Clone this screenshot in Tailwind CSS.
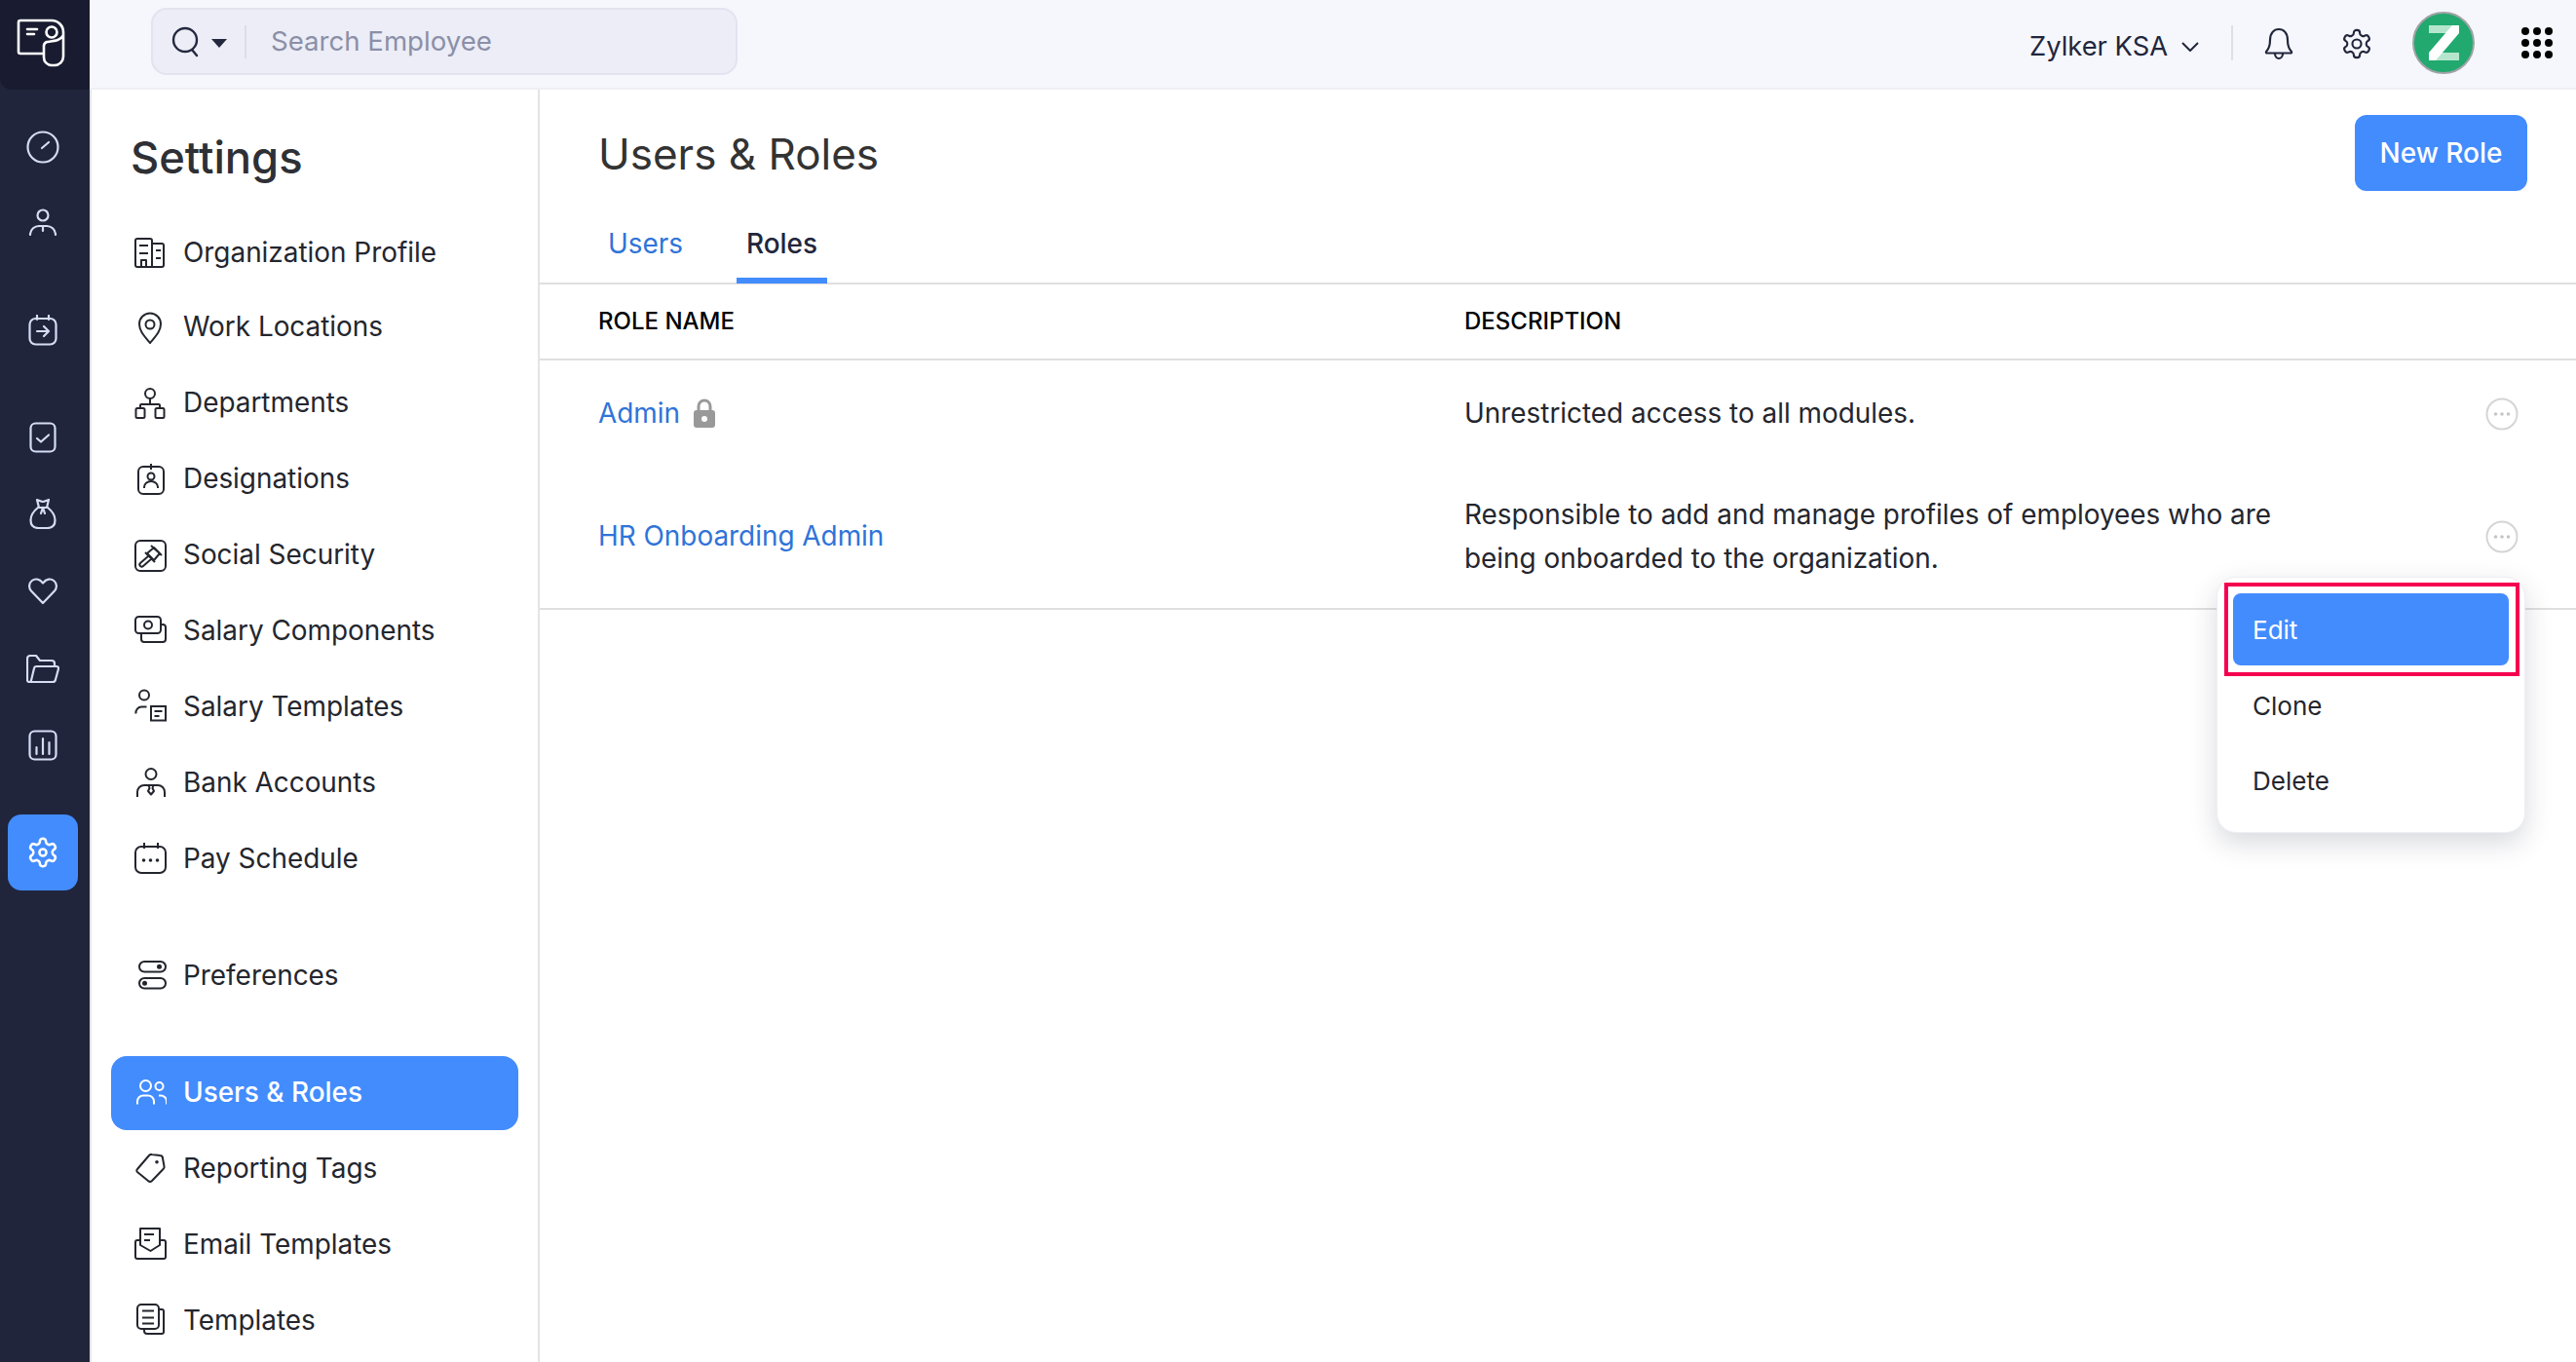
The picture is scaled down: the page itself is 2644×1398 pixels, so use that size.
<!DOCTYPE html>
<html lang="en">
<head>
<meta charset="utf-8">
<title>Users &amp; Roles</title>
<script src="https://cdn.jsdelivr.net/npm/@tailwindcss/browser@4"></script>
</head>
<body class="w-[2644px] h-[1398px] overflow-hidden bg-white [font-family:Inter,sans-serif] text-[#24262e]">
<div class="flex h-[1398px]">
  <!-- rail -->
  <aside class="w-[92px] shrink-0 bg-[#20253c] text-[#d5ddf3] flex flex-col items-center">
    <div class="w-[92px] h-[92px] bg-[#191c30] rounded-bl-[12px] flex items-center justify-center text-white pr-[8px] pb-[4px]">
      <svg width="48" height="48" viewBox="0 0 48 48" fill="none" stroke="currentColor" stroke-width="2.600" stroke-linejoin="round" stroke-linecap="round" class="overflow-visible"><path d="M27 35H3a2 2 0 0 1-2-2V3a2 2 0 0 1 2-2h32a12 12 0 0 1 12 12v25a9 9 0 0 1-9 9h-3a8 8 0 0 1-8-8V27c0-2 1-3 3-4 8-1 14-1 17-7"/><circle cx="35" cy="13" r="5.500"/><path d="M10 10h10M10 15h7"/></svg>
    </div>
    <nav class="pt-[20px] pr-[4px] flex flex-col items-center w-full">
      <div class="h-[78px] w-full flex items-center justify-center"><svg width="34" height="34" viewBox="0 0 34 34" fill="none" stroke="currentColor" stroke-width="2.200" stroke-linecap="round"><circle cx="17" cy="17" r="15.500"/><path d="M16 18l7-6"/></svg></div>
      <div class="h-[78px] w-full flex items-center justify-center"><svg width="30" height="30" viewBox="0 0 30 30" fill="none" stroke="currentColor" stroke-width="2.200" stroke-linecap="round"><circle cx="15" cy="7" r="5.500"/><path d="M2 27v-1a9 9 0 0 1 9-8h8a9 9 0 0 1 9 8v1M15 18v5"/></svg></div>
      <div class="h-[78px] w-full flex items-center justify-center mt-[32px]"><svg width="30" height="32" viewBox="0 0 30 32" fill="none" stroke="currentColor" stroke-width="2.200" stroke-linecap="round" stroke-linejoin="round"><rect x="1.500" y="4" width="27" height="26.500" rx="6"/><path d="M9 1v4M21 1v4M9 17h12M16 12l5 5-5 5"/></svg></div>
      <div class="h-[78px] w-full flex items-center justify-center mt-[32px]"><svg width="28" height="32" viewBox="0 0 28 32" fill="none" stroke="currentColor" stroke-width="2.200" stroke-linecap="round" stroke-linejoin="round"><rect x="1.500" y="1.500" width="25" height="29" rx="5"/><path d="M8 17l4 3.500 8-7"/></svg></div>
      <div class="h-[78px] w-full flex items-center justify-center"><svg width="28" height="32" viewBox="0 0 28 32" fill="none" stroke="currentColor" stroke-width="2.200" stroke-linecap="round" stroke-linejoin="round"><path d="M9 10C4 14 1.500 19 1.500 23c0 5 3 8 8 8h9c5 0 8-3 8-8 0-4-2.500-9-7.500-13"/><path d="M8 2c3 1 4 2 6 2s3-1 6-2l-2 8h-8zM14 10l-2 6M14 10l2 6"/></svg></div>
      <div class="h-[78px] w-full flex items-center justify-center mt-[2px]"><svg width="30" height="28" viewBox="0 0 30 28" fill="none" stroke="currentColor" stroke-width="2.200" stroke-linejoin="round"><path d="M15 26L3 13.500C0 10 .8 5.500 3.800 3c3-2.300 7.500-2 11.200 2.500C18.700 1 23.200.7 26.200 3c3 2.500 3.800 7 .8 10.500z"/></svg></div>
      <div class="h-[78px] w-full flex items-center justify-center mt-[2px]"><svg width="34" height="30" viewBox="0 0 34 30" fill="none" stroke="currentColor" stroke-width="2.200" stroke-linecap="round" stroke-linejoin="round"><path d="M3 28a2 2 0 0 1-2-2V4a3 3 0 0 1 3-3h6l4 5h12a3 3 0 0 1 3 3v3"/><path d="M3 28a2 2 0 0 0 2-1.500L8 14a2.500 2.500 0 0 1 2.500-2H31a2 2 0 0 1 2 2.500l-3 11a3 3 0 0 1-3 2.500z"/></svg></div>
      <div class="h-[78px] w-full flex items-center justify-center"><svg width="30" height="32" viewBox="0 0 30 32" fill="none" stroke="currentColor" stroke-width="2.200" stroke-linecap="round"><rect x="1.500" y="1.500" width="27" height="29" rx="5"/><path d="M8.500 18v7M15 9v16M21.500 13v12"/></svg></div>
      <div class="mt-[32px] w-[72px] h-[78px] rounded-[14px] bg-[#438cfe] text-white flex items-center justify-center"><svg width="34" height="34" viewBox="0 0 24 24" fill="none" stroke="currentColor" stroke-width="1.800" stroke-linejoin="round"><path d="M12.220 2h-.440a2 2 0 0 0-2 2v.180a2 2 0 0 1-1 1.730l-.430.250a2 2 0 0 1-2 0l-.150-.080a2 2 0 0 0-2.730.730l-.220.380a2 2 0 0 0 .730 2.730l.150.100a2 2 0 0 1 1 1.720v.510a2 2 0 0 1-1 1.740l-.150.090a2 2 0 0 0-.730 2.730l.220.380a2 2 0 0 0 2.730.730l.150-.080a2 2 0 0 1 2 0l.430.250a2 2 0 0 1 1 1.730V20a2 2 0 0 0 2 2h.440a2 2 0 0 0 2-2v-.180a2 2 0 0 1 1-1.730l.430-.250a2 2 0 0 1 2 0l.150.080a2 2 0 0 0 2.730-.730l.220-.390a2 2 0 0 0-.730-2.730l-.150-.080a2 2 0 0 1-1-1.740v-.500a2 2 0 0 1 1-1.740l.150-.090a2 2 0 0 0 .730-2.730l-.220-.380a2 2 0 0 0-2.730-.730l-.150.080a2 2 0 0 1-2 0l-.430-.250a2 2 0 0 1-1-1.730V4a2 2 0 0 0-2-2z"/><circle cx="12" cy="12" r="2.500"/></svg></div>
    </nav>
  </aside>

  <div class="flex-1 flex flex-col min-w-0">
    <!-- top bar -->
    <header class="h-[92px] shrink-0 bg-[#f6f7fc] border-b-2 border-[#eeeff3] flex items-center pl-[63px] pr-[24px]">
      <div class="w-[602px] h-[69px] -mt-[5px] rounded-[16px] bg-[#ecedf6] border-2 border-[#e2e3ef] flex items-center pl-[19px]">
        <svg width="30" height="32" viewBox="0 0 30 32" fill="none" stroke="#24283f" stroke-width="2.400" stroke-linecap="round"><circle cx="14" cy="14" r="12"/><path d="M21 24l5 6"/></svg>
        <svg width="16" height="9" viewBox="0 0 16 9" class="ml-[11px] mt-[4px]"><path d="M0 0h16L8 9z" fill="#24283f"/></svg>
        <div class="w-[2px] h-[34px] bg-[#dcdde8] ml-[18px]"></div>
        <span class="ml-[25px] text-[27.600px] text-[#8b8fa8]">Search Employee</span>
      </div>
      <div class="ml-auto flex items-center -mt-[2px]">
        <span class="text-[27.300px] text-[#21263c] mt-[8px]">Zylker KSA</span>
        <svg width="18" height="10" viewBox="0 0 18 10" fill="none" stroke="#21263c" stroke-width="2" class="ml-[14px] mt-[8px]"><path d="M1 1l8 8 8-8"/></svg>
        <div class="w-[2px] h-[36px] bg-[#dfe0e6] ml-[33px]"></div>
        <svg width="30" height="34" viewBox="0 0 30 34" fill="none" stroke="#21263c" stroke-width="2.200" stroke-linejoin="round" class="ml-[32px] mt-[2px]"><path d="M2 25c3-3 4-6 4-12 0-7 4-11 9-11s9 4 9 11c0 6 1 9 4 12a1 1 0 0 1-1 1.500H3A1 1 0 0 1 2 25z"/><path d="M11 27c0 3 2 5 4 5s4-2 4-5"/></svg>
        <svg width="34" height="34" viewBox="0 0 24 24" fill="none" stroke="#21263c" stroke-width="1.500" stroke-linejoin="round" class="ml-[48px] mt-[2px]"><path d="M12.220 2h-.440a2 2 0 0 0-2 2v.180a2 2 0 0 1-1 1.730l-.430.250a2 2 0 0 1-2 0l-.150-.080a2 2 0 0 0-2.730.730l-.220.380a2 2 0 0 0 .730 2.730l.150.100a2 2 0 0 1 1 1.720v.510a2 2 0 0 1-1 1.740l-.150.090a2 2 0 0 0-.730 2.730l.220.380a2 2 0 0 0 2.730.730l.150-.080a2 2 0 0 1 2 0l.430.250a2 2 0 0 1 1 1.730V20a2 2 0 0 0 2 2h.440a2 2 0 0 0 2-2v-.180a2 2 0 0 1 1-1.730l.430-.250a2 2 0 0 1 2 0l.150.080a2 2 0 0 0 2.730-.730l.220-.390a2 2 0 0 0-.730-2.730l-.150-.080a2 2 0 0 1-1-1.740v-.500a2 2 0 0 1 1-1.740l.150-.090a2 2 0 0 0 .730-2.730l-.220-.380a2 2 0 0 0-2.730-.730l-.150.080a2 2 0 0 1-2 0l-.430-.250a2 2 0 0 1-1-1.730V4a2 2 0 0 0-2-2z"/><circle cx="12" cy="12" r="3.200"/></svg>
        <svg width="64" height="64" viewBox="0 0 64 64" class="ml-[40px]"><circle cx="32" cy="32" r="31" fill="#21a96f" stroke="#a0a3a5" stroke-width="2"/><path d="M17 14h31v8L31 42h17v8H17v-8l17-20H17z" fill="#fff"/><path d="M17 14h24l-7 8H17zM48 42v8H24l7-8z" fill="#b5e6cd"/></svg>
        <svg width="32" height="32" viewBox="0 0 32 32" class="ml-[48px]" fill="#000"><circle cx="4" cy="4" r="4"/><circle cx="16" cy="4" r="4"/><circle cx="28" cy="4" r="4"/><circle cx="4" cy="16" r="4"/><circle cx="16" cy="16" r="4"/><circle cx="28" cy="16" r="4"/><circle cx="4" cy="28" r="4"/><circle cx="16" cy="28" r="4"/><circle cx="28" cy="28" r="4"/></svg>
      </div>
    </header>

    <div class="flex-1 flex min-h-0">
      <!-- settings nav -->
      <aside class="w-[462px] shrink-0 border-x-2 border-[#e4e4e6] pl-[20px] pr-[20px] text-[27.900px] text-[#24262e]">
        <h2 class="pl-[20px] pt-[43px] h-[130px] text-[45.300px] leading-[54px] font-medium text-[#2e3035]">Settings</h2>
        <ul class="flex flex-col gap-[2px]">
          <li class="h-[76px] -mb-[2px] flex items-center pl-[24px] gap-[17px]"><svg width="33" height="33" viewBox="0 0 33 33" fill="none" stroke="currentColor" stroke-width="2" stroke-linejoin="round" class="overflow-visible"><path d="M1 28V3a2 2 0 0 1 2-2h13a2 2 0 0 1 2 2v27"/><path d="M18 6h10a2 2 0 0 1 2 2v20a2 2 0 0 1-2 2H3a2 2 0 0 1-2-2"/><path d="M5 8h9M5 16h9M7 30v-7h5v7M22 13h5M22 21h5"/></svg><span>Organization Profile</span></li>
          <li class="h-[76px] flex items-center pl-[24px] gap-[17px]"><svg width="33" height="33" viewBox="0 0 33 33" fill="none" stroke="currentColor" stroke-width="2"><path d="M16 32C10 25 5 20 5 12.500a11 11 0 0 1 22 0C27 20 22 25 16 32z" stroke-linejoin="round"/><circle cx="16" cy="13" r="4.500"/></svg><span>Work Locations</span></li>
          <li class="h-[76px] flex items-center pl-[24px] gap-[17px]"><svg width="33" height="33" viewBox="0 0 33 33" fill="none" stroke="currentColor" stroke-width="2"><circle cx="16" cy="6" r="5"/><rect x="1.500" y="21" width="9" height="10" rx="1.500"/><rect x="21.500" y="21" width="9" height="10" rx="1.500"/><path d="M6 21v-3a1 1 0 0 1 1-1h18a1 1 0 0 1 1 1v3M16 11v6"/></svg><span>Departments</span></li>
          <li class="h-[76px] flex items-center pl-[24px] gap-[17px]"><svg width="33" height="33" viewBox="0 0 33 33" fill="none" stroke="currentColor" stroke-width="2"><rect x="4" y="3" width="26" height="28" rx="5"/><path d="M17 0v6"/><circle cx="17" cy="13" r="3.500"/><path d="M10 25v-1a7 6 0 0 1 14 0v1"/></svg><span>Designations</span></li>
          <li class="h-[76px] flex items-center pl-[24px] gap-[17px]"><svg width="33" height="33" viewBox="0 0 33 33" fill="none" stroke="currentColor" stroke-width="2" stroke-linejoin="round"><rect x="1" y="1" width="31" height="31" rx="5"/><path d="M20 8l6 6-6 7-7-7zM17 6l11 10M11 13l10 10M14 17l-8 7a2 2 0 0 0 3 3l8-7"/></svg><span>Social Security</span></li>
          <li class="h-[76px] flex items-center pl-[24px] gap-[17px]"><svg width="33" height="33" viewBox="0 0 33 33" fill="none" stroke="currentColor" stroke-width="2"><rect x="1" y="1" width="26" height="17" rx="3.500"/><circle cx="14" cy="9.500" r="4"/><path d="M27 9h2a3 3 0 0 1 3 3v12a3 3 0 0 1-3 3H10a3 3 0 0 1-3-3v-6"/></svg><span>Salary Components</span></li>
          <li class="h-[76px] flex items-center pl-[24px] gap-[17px]"><svg width="33" height="33" viewBox="0 0 33 33" fill="none" stroke="currentColor" stroke-width="2" class="overflow-visible"><circle cx="10" cy="3.500" r="5"/><path d="M1.500 22.500a6 6 0 0 1 6-7h5"/><rect x="17" y="15" width="15" height="14.500"/><path d="M20.500 20h8M20.500 25h5"/></svg><span>Salary Templates</span></li>
          <li class="h-[76px] flex items-center pl-[24px] gap-[17px]"><svg width="33" height="33" viewBox="0 0 33 33" fill="none" stroke="currentColor" stroke-width="2" stroke-linejoin="round"><circle cx="17" cy="6.500" r="5.500"/><path d="M3 30v-5a7 7 0 0 1 7-7h14a7 7 0 0 1 7 7v5"/><path d="M14.500 18h5l-1 3 1.500 3-3 3.500-3-3.500 1.500-3z"/></svg><span>Bank Accounts</span></li>
          <li class="h-[76px] flex items-center pl-[24px] gap-[17px]"><svg width="33" height="33" viewBox="0 0 33 33" fill="none" stroke="currentColor" stroke-width="2" class="overflow-visible"><rect x="1" y="3" width="31" height="27" rx="6"/><path d="M10 -1v6M24 -1v6"/><circle cx="9.500" cy="17" r="1.800" fill="currentColor" stroke="none"/><circle cx="16.500" cy="17" r="1.800" fill="currentColor" stroke="none"/><circle cx="23.500" cy="17" r="1.800" fill="currentColor" stroke="none"/></svg><span>Pay Schedule</span></li>
        </ul>
        <ul class="flex flex-col gap-[2px] mt-[44px]">
          <li class="h-[76px] flex items-center pl-[24px] gap-[17px]"><svg width="33" height="33" viewBox="0 0 33 33" fill="none" stroke="currentColor" stroke-width="2"><rect x="5" y="1" width="27" height="10.500" rx="5.250"/><rect x="5" y="18" width="27" height="10.500" rx="5.250"/><circle cx="25.500" cy="6.250" r="2.500" fill="currentColor" stroke="none"/><circle cx="10.500" cy="23.250" r="2.500" fill="currentColor" stroke="none"/></svg><span>Preferences</span></li>
        </ul>
        <ul class="flex flex-col gap-[2px] mt-[44px]">
          <li class="h-[76px] flex items-center pl-[24px] gap-[17px] bg-[#438cfe] rounded-[16px] text-white font-medium"><svg width="33" height="33" viewBox="0 0 33 33" fill="none" stroke="currentColor" stroke-width="2"><circle cx="11.500" cy="8.500" r="5.500"/><circle cx="25.500" cy="9" r="4"/><path d="M3 27.500v-3a6 6 0 0 1 6-6h5a6 6 0 0 1 6 6v3M25 18.500h2a6 6 0 0 1 6 6v3"/></svg><span>Users &amp; Roles</span></li>
          <li class="h-[76px] flex items-center pl-[24px] gap-[17px]"><svg width="33" height="33" viewBox="0 0 33 33" fill="none" stroke="currentColor" stroke-width="2" stroke-linejoin="round"><path d="M18 1l8 1a3 3 0 0 1 3 3l1.500 8a3 3 0 0 1-1 3L18 28a3 3 0 0 1-4 0L3 19a2 2 0 0 1 0-3L15 2a3 3 0 0 1 3-1z"/><circle cx="23" cy="8.700" r="1.800" fill="currentColor" stroke="none"/></svg><span>Reporting Tags</span></li>
          <li class="h-[76px] flex items-center pl-[24px] gap-[17px]"><svg width="33" height="33" viewBox="0 0 33 33" fill="none" stroke="currentColor" stroke-width="2" stroke-linejoin="round" class="overflow-visible"><path d="M6 11H3a2 2 0 0 0-2 2v15a2 2 0 0 0 2 2h27a2 2 0 0 0 2-2V13a2 2 0 0 0-2-2h-4"/><path d="M6 16V-1h20v17l-9.500 6z"/><path d="M10 5h10M10 11h6"/></svg><span>Email Templates</span></li>
          <li class="h-[76px] flex items-center pl-[24px] gap-[17px]"><svg width="33" height="33" viewBox="0 0 33 33" fill="none" stroke="currentColor" stroke-width="2" stroke-linejoin="round" class="overflow-visible"><rect x="3" y="-1" width="22" height="25" rx="4"/><path d="M25 4h3a2 2 0 0 1 2 2v21a2 2 0 0 1-2 2H13a3 3 0 0 1-3-3v-2M8 5.500h12M8 12.500h12M8 18.500h12"/></svg><span>Templates</span></li>
        </ul>
      </aside>

      <!-- main content -->
      <main class="relative flex-1 min-w-0 flex flex-col">
        <div class="flex items-start justify-between pl-[60px] pr-[50px] pt-[26px]">
          <h1 class="h-[78px] pt-[2px] flex items-center text-[44px] text-[#333]">Users &amp; Roles</h1>
          <button class="w-[177px] h-[78px] rounded-[12px] bg-[#438cfe] text-white text-[28px] font-medium">New Role</button>
        </div>
        <div class="mt-[12px] h-[84px] border-b-2 border-[#dfdfdf] flex pl-[60px] text-[27.900px]">
          <div class="h-[83px] pt-[2px] flex items-center px-[10px] border-y-[6px] border-transparent text-[#2f74d8]">Users</div>
          <div class="ml-[45px] h-[83px] pt-[2px] flex items-center px-[10px] border-y-[6px] border-t-transparent border-b-[#438cfe] text-[#21263c] font-medium">Roles</div>
        </div>
        <div class="h-[78px] border-b-2 border-[#dfdfdf] flex items-center pl-[60px] text-[24px] font-medium text-black">
          <div class="w-[889px]">ROLE NAME</div><div>DESCRIPTION</div>
        </div>
        <div class="h-[107px] pt-[2px] flex items-center pl-[60px] text-[27.900px]">
          <div class="w-[889px] flex items-center gap-[13px] text-[#2f74d8]"><span>Admin</span><svg width="24" height="30" viewBox="0 0 24 30"><path d="M6 12V8a6 6 0 0 1 12 0v4" fill="none" stroke="#999" stroke-width="3"/><rect x="1" y="12" width="22" height="18" rx="3" fill="#999"/><circle cx="12" cy="21" r="3" fill="#fff"/></svg></div>
          <div class="w-[1004px]">Unrestricted access to all modules.</div>
          <svg width="34" height="34" viewBox="0 0 34 34" fill="none" class="ml-[44px]"><circle cx="17" cy="17" r="15.500" stroke="#d5d5d5" stroke-width="2"/><g fill="#c5c5c5"><circle cx="10.500" cy="17" r="1.800"/><circle cx="17" cy="17" r="1.800"/><circle cx="23.500" cy="17" r="1.800"/></g></svg>
        </div>
        <div class="h-[149px] border-b-2 border-[#dfdfdf] flex items-center pl-[60px] text-[27.900px]">
          <div class="w-[889px] text-[#2f74d8]">HR Onboarding Admin</div>
          <div class="w-[1004px] pt-[1px] leading-[45px]">Responsible to add and manage profiles of employees who are<br>being onboarded to the organization.</div>
          <svg width="34" height="34" viewBox="0 0 34 34" fill="none" class="ml-[44px] mt-[1px]"><circle cx="17" cy="17" r="15.500" stroke="#d5d5d5" stroke-width="2"/><g fill="#c5c5c5"><circle cx="10.500" cy="17" r="1.800"/><circle cx="17" cy="17" r="1.800"/><circle cx="23.500" cy="17" r="1.800"/></g></svg>
        </div>

        <!-- dropdown menu -->
        <div class="absolute left-[1721px] top-[500px] w-[317px] h-[263px] rounded-[20px] bg-white border border-[#eeeef4] shadow-[0_10px_28px_rgba(40,44,70,0.18)] px-[16px] pt-[16px] text-[26px]">
          <div class="h-[74px] rounded-[8px] bg-[#438cfe] text-white flex items-center pl-[20px]">Edit</div>
          <div class="h-[77px] flex items-center pl-[20px] mt-[3px]">Clone</div>
          <div class="h-[77px] flex items-center pl-[20px]">Delete</div>
          <div class="absolute left-[7px] top-[5px] w-[303px] h-[96px] border-[4px] border-[#f5004f]"></div>
        </div>
      </main>
    </div>
  </div>
</div>
</body>
</html>
